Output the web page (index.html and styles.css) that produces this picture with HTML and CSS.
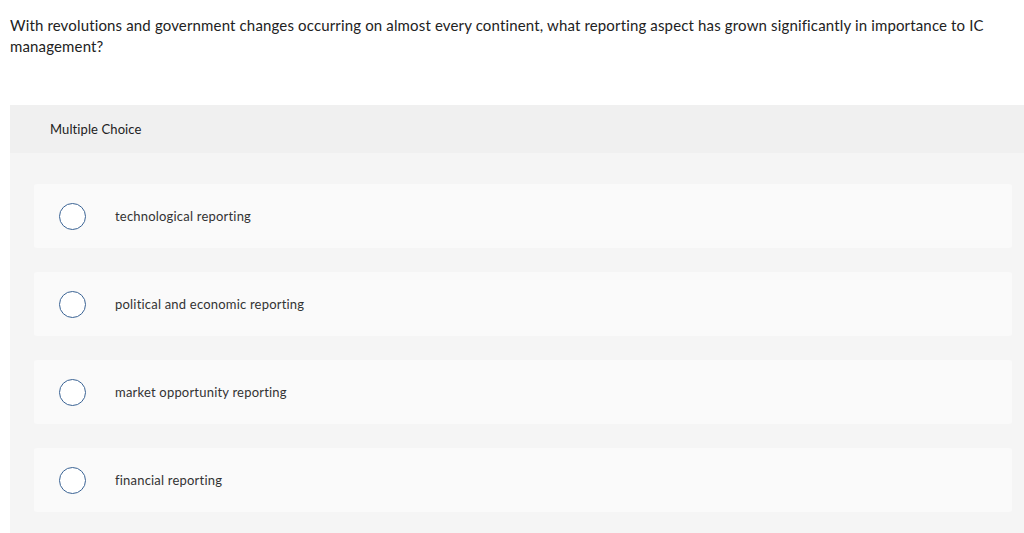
FILE: index.html
```html
<!DOCTYPE html>
<html>
<head>
<meta charset="utf-8">
<link rel="stylesheet" href="styles.css">
</head>
<body>
<div class="question">With revolutions and government changes occurring on almost every continent, what reporting aspect has grown significantly in importance to IC management?</div>
<div class="panel">
  <div class="panel-header">Multiple Choice</div>
  <div class="options">
    <div class="option"><span class="radio"></span><span class="label">technological reporting</span></div>
    <div class="option"><span class="radio"></span><span class="label">political and economic reporting</span></div>
    <div class="option"><span class="radio"></span><span class="label">market opportunity reporting</span></div>
    <div class="option"><span class="radio"></span><span class="label">financial reporting</span></div>
  </div>
</div>
</body>
</html>
```
FILE: styles.css
```css
html, body {
  margin: 0;
  padding: 0;
  background: #ffffff;
}
body {
  font-family: "Lato", "Liberation Sans", sans-serif;
  color: #222;
  overflow: hidden;
}
.question {
  height: 42px;
  padding: 15px 10px 0 10px;
  font-size: 15px;
  line-height: 21px;
  letter-spacing: 0.15px;
  width: 990px;
}
.panel {
  margin: 48px 0 0 10px;
  background: #f5f5f5;
  padding-bottom: 21px;
}
.panel-header {
  height: 48px;
  background: #f0f0f0;
  padding-left: 40px;
  display: flex;
  align-items: center;
  font-size: 13px;
  letter-spacing: 0.1px;
  color: #222;
}
.options {
  display: flex;
  flex-direction: column;
  gap: 24px;
  padding: 31px 12px 0 24px;
}
.option {
  height: 64px;
  background: #fafafa;
  border-radius: 3px;
  display: flex;
  align-items: center;
  padding-left: 25px;
}
.radio {
  width: 25px;
  height: 25px;
  border: 1px solid #3a6394;
  border-radius: 50%;
  background: #fff;
  flex: none;
}
.label {
  margin-left: 29px;
  font-size: 13px;
  letter-spacing: 0.2px;
  color: #333;
}
```
